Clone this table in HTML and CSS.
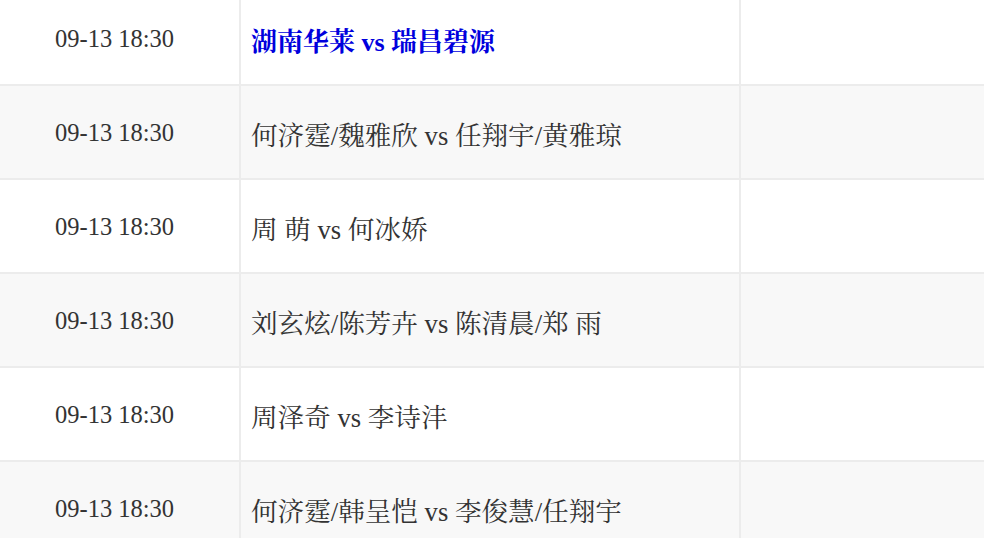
FILE: index.html
```html
<!DOCTYPE html>
<html lang="zh">
<head>
<meta charset="utf-8">
<title>赛程</title>
<link rel="stylesheet" href="styles.css">
</head>
<body>
<div class="table">
  <div class="row">
    <div class="cell time">09-13 18:30</div>
    <div class="cell match"><a class="team-link" href="#">湖南华莱 vs 瑞昌碧源</a></div>
    <div class="cell extra"></div>
  </div>
  <div class="row alt">
    <div class="cell time">09-13 18:30</div>
    <div class="cell match">何济霆/魏雅欣 vs 任翔宇/黄雅琼</div>
    <div class="cell extra"></div>
  </div>
  <div class="row">
    <div class="cell time">09-13 18:30</div>
    <div class="cell match">周 萌 vs 何冰娇</div>
    <div class="cell extra"></div>
  </div>
  <div class="row alt">
    <div class="cell time">09-13 18:30</div>
    <div class="cell match">刘玄炫/陈芳卉 vs 陈清晨/郑 雨</div>
    <div class="cell extra"></div>
  </div>
  <div class="row">
    <div class="cell time">09-13 18:30</div>
    <div class="cell match">周泽奇 vs 李诗沣</div>
    <div class="cell extra"></div>
  </div>
  <div class="row alt">
    <div class="cell time">09-13 18:30</div>
    <div class="cell match">何济霆/韩呈恺 vs 李俊慧/任翔宇</div>
    <div class="cell extra"></div>
  </div>
</div>
</body>
</html>
```
FILE: styles.css
```css
html, body {
  margin: 0;
  padding: 0;
  background: #ffffff;
  overflow: hidden;
}
body {
  width: 984px;
  height: 538px;
  font-family: "Liberation Serif", "Noto Serif CJK SC", "Noto Sans CJK SC", serif;
  color: #333333;
}
.table {
  margin-top: -8px;
}
.row {
  display: grid;
  grid-template-columns: 239px 500px 1fr;
  height: 92px;
  border-bottom: 2px solid #ececec;
  background: #ffffff;
}
.row.alt {
  background: #f8f8f8;
}
.cell {
  display: flex;
  align-items: center;
}
.time {
  padding-left: 55px;
  font-size: 24.5px;
  padding-top: 2px;
}
.match {
  border-left: 2px solid #ececec;
  padding-left: 10px;
  font-size: 26.6px;
  padding-top: 2px;
}
.extra {
  border-left: 2px solid #ececec;
}
.team-link {
  color: #0000dd;
  font-weight: bold;
  font-size: 26px;
  text-decoration: none;
}
```
